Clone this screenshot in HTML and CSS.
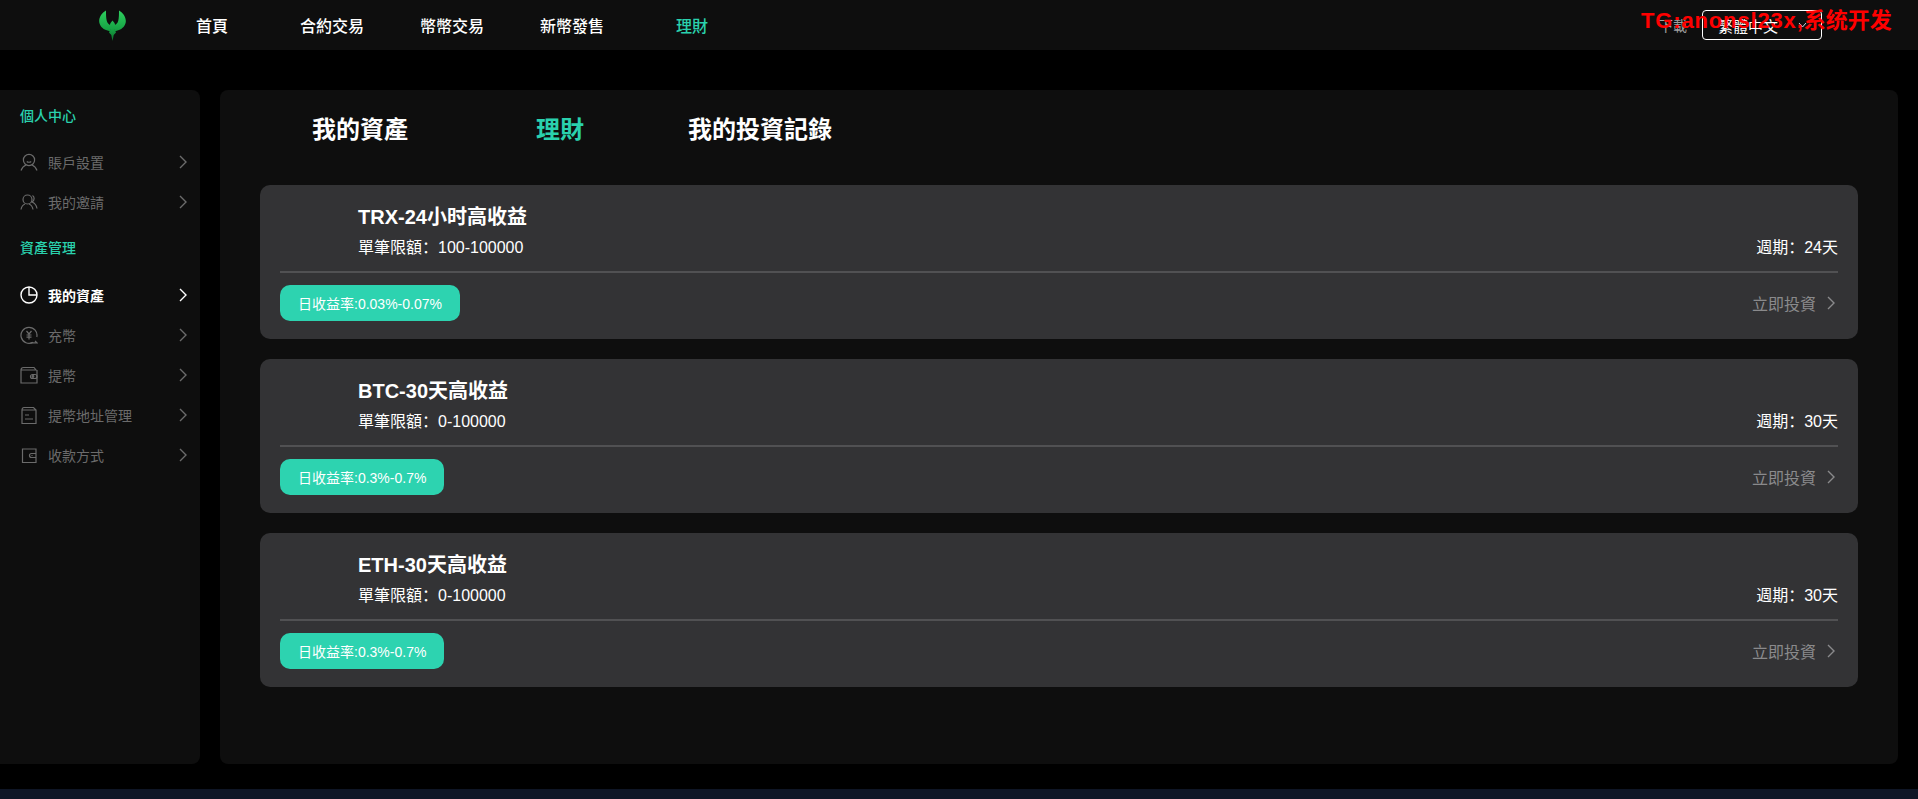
FILE: index.html
```html
<!DOCTYPE html>
<html lang="zh-CN">
<head>
<meta charset="utf-8">
<title>理財</title>
<link rel="stylesheet" href="styles.css">
</head>
<body>
<svg class="sprite" width="0" height="0" aria-hidden="true">
  <symbol id="chev" viewBox="0 0 8 14"><path d="M1 1l6 6-6 6" fill="none" stroke="currentColor" stroke-width="1.4"/></symbol>
</svg>
<header class="topbar">
  <div class="logo">
    <svg width="27" height="31" viewBox="0 0 27 31">
      <defs><linearGradient id="lg" gradientUnits="userSpaceOnUse" x1="0" y1="0" x2="0" y2="31"><stop offset="0" stop-color="#2fd060"/><stop offset=".6" stop-color="#17a545"/><stop offset="1" stop-color="#0a6e2a"/></linearGradient></defs>
      <path fill="url(#lg)" d="M7 .5C2.500 3-.5 8 .3 12.500c.7 3.500 3.500 6.500 6.700 7.500l4.500 1.500 1-6C10.500 15 8.500 13.500 7.800 11 7 8 7 4 7 .5z"/>
      <path fill="url(#lg)" d="M20 .5c4.500 2.500 7.500 7.500 6.700 12-.7 3.500-3.500 6.500-6.700 7.500l-4.500 1.500-1-6c2-.5 4-2 4.700-4.500C20 8 20 4 20 .5z"/>
      <path fill="url(#lg)" d="M13.500 10.500l-2 2.500-1 3 1 3.500-1.500 3 2.300 2.500 1.200 6 1.200-6 2.300-2.500-1.500-3 1-3.500-1-3z"/>
    </svg>
  </div>
  <nav class="nav">
    <a class="nav-item">首頁</a>
    <a class="nav-item">合約交易</a>
    <a class="nav-item">幣幣交易</a>
    <a class="nav-item">新幣發售</a>
    <a class="nav-item is-active">理財</a>
  </nav>
  <div class="top-right">
    <span class="download">下載</span>
    <div class="lang">繁體中文
      <svg class="lang-caret" width="9" height="6" viewBox="0 0 9 6"><path d="M1 1l3.500 4L8 1" fill="none" stroke="#cfd8e3" stroke-width="1"/></svg>
    </div>
    <span class="promo"><span class="promo-latin">TG:anonsl23x,</span>系统开发</span>
  </div>
</header>

<div class="page">
  <aside class="sidebar">
    <h3 class="side-head side-head-first">個人中心</h3>
    <a class="side-item">
      <svg class="side-icon" viewBox="0 0 18 18" fill="none" stroke="currentColor" stroke-width="1.2"><circle cx="9" cy="7" r="5.600"/><path d="M1 17.500c1-3 3-4.700 5-5.500M17 17.500c-1-3-3-4.700-5-5.500M6.800 8.500c1 1 3.400 1 4.400 0"/></svg>
      <span class="side-label">賬戶設置</span>
      <svg class="side-chev"><use href="#chev"/></svg>
    </a>
    <a class="side-item">
      <svg class="side-icon" viewBox="0 0 18 18" fill="none" stroke="currentColor" stroke-width="1.2"><circle cx="7.500" cy="6.500" r="4.500"/><path d="M1 16.500c.5-3 2-4.700 4-5.500M13 16.500c-.5-3-2-4.700-4-5.500M12.500 2.500c2 1 2.500 5-.5 6.500 2.500 1 4.500 3.500 5 6.500"/></svg>
      <span class="side-label">我的邀請</span>
      <svg class="side-chev"><use href="#chev"/></svg>
    </a>
    <h3 class="side-head side-head-second">資產管理</h3>
    <a class="side-item is-current">
      <svg class="side-icon" viewBox="0 0 18 18" fill="none" stroke="currentColor" stroke-width="1.400"><circle cx="9" cy="9" r="8"/><path d="M9 1v8h8"/></svg>
      <span class="side-label">我的資產</span>
      <svg class="side-chev"><use href="#chev"/></svg>
    </a>
    <a class="side-item">
      <svg class="side-icon" viewBox="0 0 18 18" fill="none" stroke="currentColor" stroke-width="1.2"><path d="M13 16.200A8 8 0 1 1 16.800 11"/><path d="M10.500 16.800h6.500l-2-2M6.500 5L9 8l2.500-3M9 8v5.500M6.500 9h5M6.500 11.200h5"/></svg>
      <span class="side-label">充幣</span>
      <svg class="side-chev"><use href="#chev"/></svg>
    </a>
    <a class="side-item">
      <svg class="side-icon" viewBox="0 0 18 18" fill="none" stroke="currentColor" stroke-width="1.2"><path d="M1 4c0-1.500 1-2.500 2.500-2.500H14L16 4H1v13h16V4"/><rect x="10.500" y="8.500" width="6.500" height="4" rx="2"/><circle cx="13" cy="10.500" r=".8"/></svg>
      <span class="side-label">提幣</span>
      <svg class="side-chev"><use href="#chev"/></svg>
    </a>
    <a class="side-item">
      <svg class="side-icon" viewBox="0 0 18 18" fill="none" stroke="currentColor" stroke-width="1.2"><path d="M2 4c0-1.500 1-2.500 2-2.500h9.500L16 4v13.500H2zM2 4h14M5 9h4M5 13h8"/></svg>
      <span class="side-label">提幣地址管理</span>
      <svg class="side-chev"><use href="#chev"/></svg>
    </a>
    <a class="side-item">
      <svg class="side-icon" viewBox="0 0 18 18" fill="none" stroke="currentColor" stroke-width="1.2"><path d="M16 3H2.500v13.500H16zM16 7.500h-4.500a2 2 0 0 0 0 4H16M11.500 9.500h1"/></svg>
      <span class="side-label">收款方式</span>
      <svg class="side-chev"><use href="#chev"/></svg>
    </a>
  </aside>

  <main class="panel">
    <div class="tabs">
      <a class="tab">我的資產</a>
      <a class="tab is-active">理財</a>
      <a class="tab">我的投資記錄</a>
    </div>
    <section class="card">
      <div class="card-top">
        <div class="card-info">
          <h2 class="card-title">TRX-24小时高收益</h2>
          <p class="card-line">單筆限額：100-100000</p>
        </div>
        <p class="card-line">週期：24天</p>
      </div>
      <div class="card-bottom">
        <span class="pill">日收益率:0.03%-0.07%</span>
        <a class="invest">立即投資<svg class="invest-chev"><use href="#chev"/></svg></a>
      </div>
    </section>
    <section class="card">
      <div class="card-top">
        <div class="card-info">
          <h2 class="card-title">BTC-30天高收益</h2>
          <p class="card-line">單筆限額：0-100000</p>
        </div>
        <p class="card-line">週期：30天</p>
      </div>
      <div class="card-bottom">
        <span class="pill">日收益率:0.3%-0.7%</span>
        <a class="invest">立即投資<svg class="invest-chev"><use href="#chev"/></svg></a>
      </div>
    </section>
    <section class="card">
      <div class="card-top">
        <div class="card-info">
          <h2 class="card-title">ETH-30天高收益</h2>
          <p class="card-line">單筆限額：0-100000</p>
        </div>
        <p class="card-line">週期：30天</p>
      </div>
      <div class="card-bottom">
        <span class="pill">日收益率:0.3%-0.7%</span>
        <a class="invest">立即投資<svg class="invest-chev"><use href="#chev"/></svg></a>
      </div>
    </section>
  </main>
</div>
<footer class="footer"></footer>
</body>
</html>
```

FILE: styles.css
```css
* { box-sizing: border-box; margin: 0; padding: 0; }
html, body { height: 799px; overflow: hidden; }
body {
  background: #000;
  color: #fff;
  font-family: "Liberation Sans", "Noto Sans CJK SC", sans-serif;
  font-size: 14px;
}
.sprite { position: absolute; }

.topbar {
  height: 50px;
  background: #0e0e0e;
  display: flex;
  align-items: center;
  position: relative;
}
.logo { width: 152px; padding-left: 99px; display: flex; align-items: center; }
.nav { display: flex; }
.nav-item {
  width: 120px;
  text-align: center;
  font-size: 16px;
  font-weight: 500;
  color: #fff;
}
.nav-item.is-active { color: #2ad1ad; }

.top-right {
  margin-left: auto;
  margin-right: 96px;
  display: flex;
  align-items: center;
  gap: 15px;
}
.download { color: #a0a0a0; font-size: 14px; }
.lang {
  width: 120px;
  height: 30px;
  border: 1px solid #fff;
  border-radius: 4px;
  display: flex;
  align-items: center;
  justify-content: space-between;
  font-size: 15px;
  padding: 0 14px 0 15px;
}
.promo {
  position: absolute;
  left: 1641px;
  top: 8px;
  color: #f00;
  font-size: 22px;
  line-height: 26px;
  font-weight: 700;
  white-space: nowrap;
}
.promo-latin { letter-spacing: .85px; }

.page {
  display: flex;
  gap: 20px;
  padding: 40px 20px 0 0;
  height: 739px;
}
.sidebar {
  width: 200px;
  height: 674px;
  background: #0e0e0e;
  border-radius: 0 8px 8px 0;
  padding: 16px 13px 0 20px;
}
.side-head {
  font-size: 14px;
  line-height: 20px;
  font-weight: 500;
  color: #2ad1ad;
  margin-bottom: 17px;
}
.side-head-first { margin-bottom: 16px; }
.side-head-second { margin-top: 16px; }
.side-item {
  height: 40px;
  display: flex;
  align-items: center;
  color: #6b6b6b;
}
.side-item.is-current { color: #fff; font-weight: 700; }
.side-icon { width: 18px; height: 18px; flex: none; }
.side-label { margin-left: 10px; flex: 1; }
.side-chev { width: 8px; height: 14px; flex: none; color: #6b6b6b; }
.is-current .side-chev { color: #fff; }

.panel {
  flex: 1;
  height: 674px;
  background: #0e0e0e;
  border-radius: 8px;
  padding: 0 40px;
}
.tabs {
  display: flex;
  height: 74px;
  align-items: center;
  margin-bottom: 21px;
}
.tab { width: 200px; text-align: center; font-size: 24px; font-weight: 700; color: #fff; }
.tab.is-active { color: #2ad1ad; }

.card {
  height: 154px;
  background: #333335;
  border-radius: 10px;
  padding: 0 20px;
  margin-bottom: 20px;
  display: flex;
  flex-direction: column;
}
.card-top {
  height: 88px;
  border-bottom: 2px solid #515153;
  display: flex;
  justify-content: space-between;
  align-items: flex-end;
  padding-bottom: 13px;
}
.card-info { padding-left: 78px; }
.card-title { font-size: 20px; line-height: 30px; font-weight: 700; margin-bottom: 6px; }
.card-line { font-size: 16px; line-height: 20px; color: #fff; }
.card-bottom {
  flex: 1;
  display: flex;
  justify-content: space-between;
  align-items: flex-start;
  padding-top: 12px;
}
.pill {
  height: 36px;
  padding: 0 18px;
  display: flex;
  align-items: center;
  background: #2dd3b0;
  border-radius: 10px;
  font-size: 14px;
  color: #fff;
}
.invest {
  display: flex;
  align-items: center;
  height: 36px;
  font-size: 16px;
  color: #8a8a8c;
  padding-right: 2px;
}
.invest-chev { width: 10px; height: 14px; margin-left: 10px; color: #8a8a8c; }

.footer { height: 10px; background: #0f1626; }
```
